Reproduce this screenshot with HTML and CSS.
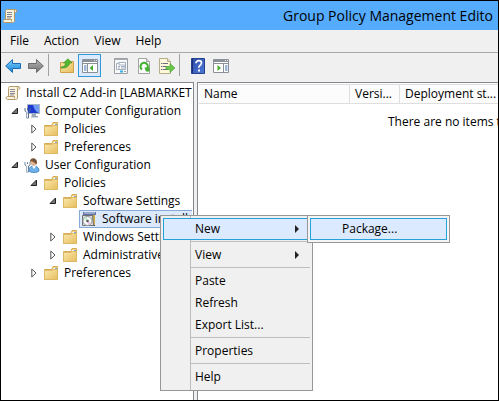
FILE: index.html
```html
<!DOCTYPE html>
<html lang="en">
<head>
<meta charset="utf-8">
<title>Group Policy Management Editor</title>
<link rel="stylesheet" href="styles.css">
</head>
<body>
<svg class="defs" aria-hidden="true">
  <defs>
    <linearGradient id="gold" x1="0" y1="0" x2="1" y2="1"><stop offset="0" stop-color="#fbe9ae"/><stop offset="1" stop-color="#e6bd5c"/></linearGradient>
    <linearGradient id="blue" x1="0" y1="0" x2="0" y2="1"><stop offset="0" stop-color="#7fd0fb"/><stop offset="1" stop-color="#1583d8"/></linearGradient>
    <linearGradient id="gray" x1="0" y1="0" x2="0" y2="1"><stop offset="0" stop-color="#b4b4b4"/><stop offset="1" stop-color="#727272"/></linearGradient>
    <linearGradient id="help" x1="0" y1="0" x2="1" y2="1"><stop offset="0" stop-color="#2c4aa8"/><stop offset="1" stop-color="#4c7ad8"/></linearGradient>
  </defs>
  <symbol id="i-folder" viewBox="0 0 16 16">
    <path d="M1.500 4.500h7.500l1-3h4.500v13h-13z" fill="#f0d183" stroke="#d6ad56"/>
    <path d="M10.500 3.500h3.500" stroke="#fff"/><path d="M12 3.500h2" stroke="#6fa6dc"/>
    <path d="M1.500 5.500h7.500l1.500-1h4v10h-13z" fill="url(#gold)" stroke="#dfba66"/>
  </symbol>
  <symbol id="i-scroll" viewBox="0 0 16 16">
    <path d="M4.500 1.500h9c2 0 1.500 3 0 3h-1v8.500c0 1-1 1.500-2 1.500h-8c-2 0-1.500-3 0-3h1v-8c0-1 .5-2 1-2z" fill="#fbf4dc" stroke="#b39a6c"/>
    <path d="M12.500 4.500v-1.500c0-1 1-1.500 1.500-1M2.500 11.500h7v2" fill="none" stroke="#b39a6c"/>
    <path d="M5 4.500h5M5 6.500h5M5 8.500h5M5 10h4" stroke="#8b8798"/>
  </symbol>
  <symbol id="i-computer" viewBox="0 0 16 16">
    <path d="M3.500 1.500h12v9h-12z" fill="#1e39cf" stroke="#a9b4c4"/>
    <path d="M9 2h6v8c-3-1-5-4-6-8z" fill="#6f9cf5"/>
    <path d="M8 11h4v2h2v1.500H7z" fill="#9aa7b8"/>
    <path d="M1 5v3l1.500 1v6h2V9L6 8V5M3.500 5v2" fill="none" stroke="#596f8c"/><path d="M3 8v7" stroke="#dce8f4"/>
  </symbol>
  <symbol id="i-user" viewBox="0 0 16 16">
    <path d="M5 14c0-4 2-5 5-5s5 2 5 5c-2 2-8 2-10 0z" fill="#6fb0e8" stroke="#4a8cc8"/>
    <path d="M8 9l2 3 2-3z" fill="#fff"/>
    <circle cx="9.500" cy="5.500" r="3" fill="#e5b48c"/>
    <path d="M6 5C5.500 0 13.500 0 13 6l-1 2c0-3-3-2-4-4z" fill="#76543a"/>
    <path d="M1 5v3l1.500 1v6h2V9L6 8V5M3.500 5v2" fill="none" stroke="#6d819c"/><path d="M3 8v7" stroke="#dce8f4"/>
  </symbol>
  <symbol id="i-software" viewBox="0 0 16 16">
    <path d="M2 1h13v3H2z" fill="#6272a8"/><path d="M3 2h11" stroke="#d2dcf0"/>
    <path d="M3 4h11v11H3z" fill="#464646"/><path d="M12 4h2v10h-2z" fill="#d1ab43"/>
    <path d="M1.500 4.500h10l1 10h-11z" fill="#dfe0e3" stroke="#707070"/>
    <circle cx="6.500" cy="10" r="4.500" fill="#f6f6f6" stroke="#8d9599"/>
    <path d="M6.500 10L3 7.500A4 4 0 0 1 6 6z" fill="#b9e7c2"/><path d="M6.500 10l3.500 2A4 4 0 0 1 7 14z" fill="#e4c2e0"/>
    <circle cx="6.500" cy="10" r="1.300" fill="#555"/>
  </symbol>
  <symbol id="i-back" viewBox="0 0 16 16"><path d="M.7 8L7.500 1.500v4h8v5h-8v4z" fill="url(#blue)" stroke="#1a6cb4"/></symbol>
  <symbol id="i-forward" viewBox="0 0 16 16"><path d="M15.300 8L8.500 1.500v4h-8v5h8v4z" fill="url(#gray)" stroke="#6c6c6c"/></symbol>
  <symbol id="i-up" viewBox="0 0 16 16">
    <path d="M1.500 4.500h6l1-1h6v11h-13z" fill="url(#gold)" stroke="#cfa24a"/>
    <path d="M2 9c3 0 4.500-2 4.500-4H4.500L9 .8 13 5h-2.500C10.500 8 7 10.500 2 10z" fill="#54b82f" stroke="#3b8d20" stroke-width=".6"/>
  </symbol>
  <symbol id="i-tree" viewBox="0 0 16 16">
    <path d="M.5 1.500h15v13H.5z" fill="#fff" stroke="#8b8f97"/><path d="M1 2h14v2H1z" fill="#8b8f97"/><path d="M12 2.500h3" stroke="#eee" stroke-dasharray="1 1"/>
    <path d="M1 5.500h14M5.500 6v8" stroke="#8b8f97"/><path d="M2 8h2.500M2 10h2.500M2 12h2.500" stroke="#3b70b5"/>
    <path d="M11 7v6L7.500 10z" fill="#44ae2e"/>
  </symbol>
  <symbol id="i-pane" viewBox="0 0 16 16">
    <path d="M.5 1.500h15v13H.5z" fill="#fff" stroke="#8b8f97"/><path d="M1 2h14v2H1z" fill="#8b8f97"/><path d="M12 2.500h3" stroke="#eee" stroke-dasharray="1 1"/>
    <path d="M1 5.500h14M10.500 6v8" stroke="#8b8f97"/><path d="M12 8h2.500M12 10h2.500M12 12h2.500" stroke="#3b70b5"/>
    <path d="M4.500 7v6l3.500-3z" fill="#44ae2e"/>
  </symbol>
  <symbol id="i-props" viewBox="0 0 16 16">
    <path d="M1.500.5h13v15h-13z" fill="#f7f8f9" stroke="#9b9fa5"/><path d="M2 1.500h12" stroke="#a9adb3"/>
    <path d="M3.500 5.500h2v-1h7v7h-9z" fill="#fff" stroke="#a3afbf"/><path d="M6 5v2h6M5 8.500h2M8 8.500h4M5 10h2M8 10h4" fill="none" stroke="#a3afbf"/>
    <path d="M7 13.500h3" stroke="#34b0e7" stroke-width="2"/><path d="M11 13.500h2" stroke="#9b9fa5"/>
  </symbol>
  <symbol id="i-refresh" viewBox="0 0 16 16">
    <path d="M2.500.5h8l3 3v12h-11z" fill="#fbfbfb" stroke="#a3a3a3"/><path d="M10.500.5v3h3" fill="#ddd" stroke="#a3a3a3"/>
    <path d="M6 11.500A3.700 3.700 0 1 1 11 11" fill="none" stroke="#40b02f" stroke-width="2"/><path d="M8.500 9.500h5v4H10z" fill="#40b02f"/>
  </symbol>
  <symbol id="i-export" viewBox="0 0 16 16">
    <path d="M.5.500h8l3 3v12H.5z" fill="#fff8da" stroke="#b6ad8b"/><path d="M8.500.5v3h3" fill="#e7dfc0" stroke="#b6ad8b"/>
    <path d="M2 5.500h1.500M4 5.500h5M2 8.500h1.500M4 8.500h4M2 11.500h1.500M4 11.500h5" stroke="#6d6d80"/>
    <path d="M7 8.500h4v-3l5 4.500-5 4.500v-3H7z" fill="#66c748" stroke="#439d2c" stroke-width=".6"/>
  </symbol>
  <symbol id="i-help" viewBox="0 0 16 16">
    <path d="M1.500.5h13v15h-13z" fill="url(#help)" stroke="#26408e"/><path d="M2.500 1v14" stroke="#183078"/>
    <path d="M6 5.200C6 1.800 11.500 2 11.500 5c0 2-2.700 2.200-2.700 4.700" fill="none" stroke="#fff" stroke-width="1.700"/><path d="M8 11.500h2v2H8z" fill="#fff"/>
  </symbol>
  <symbol id="i-open" viewBox="0 0 8 8"><path d="M6.500 1v5.500H1z" fill="#777" stroke="#222"/></symbol>
  <symbol id="i-closed" viewBox="0 0 6 10"><path d="M.8 1v8l4.200-4z" fill="#fff" stroke="#555"/></symbol>
</svg>

<main class="window">
  <header class="titlebar"><svg class="icon"><use href="#i-scroll"/></svg><h1>Group Policy Management Edito</h1></header>

  <nav class="menubar" aria-label="Main menu">
    <button type="button">File</button><button type="button">Action</button><button type="button">View</button><button type="button">Help</button>
  </nav>

  <div class="toolbar" role="toolbar" aria-label="Tools">
    <button type="button" aria-label="Back"><svg class="icon"><use href="#i-back"/></svg></button>
    <button type="button" aria-label="Forward"><svg class="icon"><use href="#i-forward"/></svg></button>
    <span class="divider"></span>
    <button type="button" aria-label="Up one level"><svg class="icon"><use href="#i-up"/></svg></button>
    <button type="button" class="pressed" aria-pressed="true" aria-label="Show console tree"><svg class="icon"><use href="#i-tree"/></svg></button>
    <span class="divider blank"></span>
    <button type="button" aria-label="Properties"><svg class="icon"><use href="#i-props"/></svg></button>
    <button type="button" aria-label="Refresh"><svg class="icon"><use href="#i-refresh"/></svg></button>
    <button type="button" aria-label="Export list"><svg class="icon"><use href="#i-export"/></svg></button>
    <span class="divider"></span>
    <button type="button" aria-label="Help"><svg class="icon"><use href="#i-help"/></svg></button>
    <button type="button" aria-label="Show action pane"><svg class="icon"><use href="#i-pane"/></svg></button>
  </div>

  <div class="panes">
    <section class="tree" aria-label="Console tree">
      <div class="row"><svg class="icon"><use href="#i-scroll"/></svg><span>Install C2 Add-in [LABMARKETI</span></div>
      <ul>
        <li>
          <div class="row"><i class="twist"><svg class="open"><use href="#i-open"/></svg></i><svg class="icon"><use href="#i-computer"/></svg><span>Computer Configuration</span></div>
          <ul>
            <li><div class="row"><i class="twist"><svg class="closed"><use href="#i-closed"/></svg></i><svg class="icon"><use href="#i-folder"/></svg><span>Policies</span></div></li>
            <li><div class="row"><i class="twist"><svg class="closed"><use href="#i-closed"/></svg></i><svg class="icon"><use href="#i-folder"/></svg><span>Preferences</span></div></li>
          </ul>
        </li>
        <li>
          <div class="row"><i class="twist"><svg class="open"><use href="#i-open"/></svg></i><svg class="icon"><use href="#i-user"/></svg><span>User Configuration</span></div>
          <ul>
            <li>
              <div class="row"><i class="twist"><svg class="open"><use href="#i-open"/></svg></i><svg class="icon"><use href="#i-folder"/></svg><span>Policies</span></div>
              <ul>
                <li>
                  <div class="row"><i class="twist"><svg class="open"><use href="#i-open"/></svg></i><svg class="icon"><use href="#i-folder"/></svg><span>Software Settings</span></div>
                  <ul>
                    <li><div class="row selected"><svg class="icon"><use href="#i-software"/></svg><span>Software installation</span></div></li>
                  </ul>
                </li>
                <li><div class="row"><i class="twist"><svg class="closed"><use href="#i-closed"/></svg></i><svg class="icon"><use href="#i-folder"/></svg><span>Windows Settings</span></div></li>
                <li><div class="row"><i class="twist"><svg class="closed"><use href="#i-closed"/></svg></i><svg class="icon"><use href="#i-folder"/></svg><span>Administrative</span></div></li>
              </ul>
            </li>
            <li><div class="row"><i class="twist"><svg class="closed"><use href="#i-closed"/></svg></i><svg class="icon"><use href="#i-folder"/></svg><span>Preferences</span></div></li>
          </ul>
        </li>
      </ul>
    </section>

    <section class="list" aria-label="Packages">
      <table>
        <colgroup><col class="col-name"><col class="col-version"><col></colgroup>
        <thead><tr><th>Name</th><th>Versi...</th><th>Deployment st...</th></tr></thead>
        <tbody><tr><td colspan="3">There are no items to</td></tr></tbody>
      </table>
    </section>
  </div>

  <div class="menu context" role="menu">
    <button type="button" role="menuitem" class="active">New<b class="arrow"></b></button>
    <hr>
    <button type="button" role="menuitem">View<b class="arrow"></b></button>
    <hr>
    <button type="button" role="menuitem">Paste</button>
    <button type="button" role="menuitem">Refresh</button>
    <button type="button" role="menuitem">Export List...</button>
    <hr>
    <button type="button" role="menuitem">Properties</button>
    <hr>
    <button type="button" role="menuitem">Help</button>
  </div>
  <div class="menu submenu" role="menu">
    <button type="button" role="menuitem" class="active">Package...</button>
  </div>
</main>
</body>
</html>
```
FILE: styles.css
```css
* { box-sizing: border-box; }

body {
  margin: 0;
  font: 12px/18px "Open Sans", "Noto Sans", sans-serif;
  color: #000;
}

button {
  font: inherit;
  color: inherit;
  background: none;
  border: 1px solid transparent;
  padding: 0;
}

.defs { position: absolute; width: 0; height: 0; }
.icon { width: 16px; height: 16px; flex: none; display: block; }

.window {
  position: relative;
  display: flex;
  flex-direction: column;
  height: 100vh;
  border: 1px solid #000;
  background: #f0f0f0;
  overflow: hidden;
}

.titlebar {
  display: flex;
  align-items: center;
  gap: 265px;
  height: 29px;
  padding-left: 1px;
  background: #55acff;
}
.titlebar h1 { margin: 0; font-size: 14px; font-weight: 400; white-space: nowrap; }

.menubar {
  display: flex;
  gap: 13px;
  height: 23px;
  padding-left: 8px;
  border-bottom: 1px solid #a8a8a8;
}

.toolbar { display: flex; height: 29px; padding-top: 1px; }
.toolbar button {
  display: flex;
  align-items: center;
  justify-content: center;
  width: 23px;
  height: 23px;
}
.toolbar .pressed { background: #daeafc; border-color: #3399dd; }
.divider { width: 1px; height: 22px; margin: 0 6px 0 1px; background: #a0a0a0; }
.divider.blank { background: none; }

.panes { display: flex; flex: 1; gap: 3px; min-height: 0; }

.tree {
  width: 193px;
  flex: none;
  padding: 1px 1px 0 4px;
  border: solid #828790;
  border-width: 1px 1px 0 0;
  background: #fff;
}
.tree ul { list-style: none; margin: 0; padding: 0; }
.tree ul ul { padding-left: 19px; }
.row {
  display: flex;
  align-items: center;
  gap: 5px;
  height: 18px;
  white-space: nowrap;
  overflow: hidden;
}
.twist { width: 19px; margin-right: -5px; flex: none; display: flex; justify-content: center; }
.open { width: 8px; height: 8px; }
.closed { width: 6px; height: 10px; }
.tree .selected {
  margin-left: -2px;
  padding-left: 1px;
  background: #dbe9fb;
  border: solid #86a9d6;
  border-width: 1px 0 1px 1px;
}
.tree ul ul ul ul { padding-left: 38px; }

.list {
  flex: 1;
  min-width: 0;
  padding: 1px 0 0 1px;
  border: solid #828790;
  border-width: 1px 0 0 1px;
  background: #fff;
  overflow: hidden;
}
table { width: 100%; table-layout: fixed; border-collapse: separate; border-spacing: 0; }
.col-name { width: 151px; }
.col-version { width: 50px; }
th {
  height: 19px;
  padding: 0 0 0 5px;
  border: solid #dedede;
  border-width: 1px 1px 1px 0;
  background: #fcfcfc;
  font-weight: 400;
  text-align: left;
  white-space: nowrap;
}
th:last-child { border-right: 0; }
td { padding: 9px 0 0 189px; white-space: nowrap; }

.menu {
  position: absolute;
  top: 214px;
  padding: 2px;
  border: 1px solid #979797;
  background: #f0f0f0;
}
.menu button {
  position: relative;
  display: block;
  width: 100%;
  height: 22px;
  padding-left: 31px;
  text-align: left;
}
.menu .active { background: #dceaff; border-color: #26a0da; }
.menu hr { height: 1px; margin: 1px 0 2px 27px; border: 0; background: #bdbdbd; }
.context {
  left: 159px;
  width: 153px;
  background: linear-gradient(#bdbdbd, #bdbdbd) 29px 0 / 1px 100% no-repeat #f0f0f0;
}
.submenu { left: 306px; width: 143px; background: #f5f5f5; }
.arrow {
  position: absolute;
  top: 6px;
  right: 10px;
  border: solid transparent;
  border-width: 4px 0 4px 4px;
  border-left-color: #222;
}
```
